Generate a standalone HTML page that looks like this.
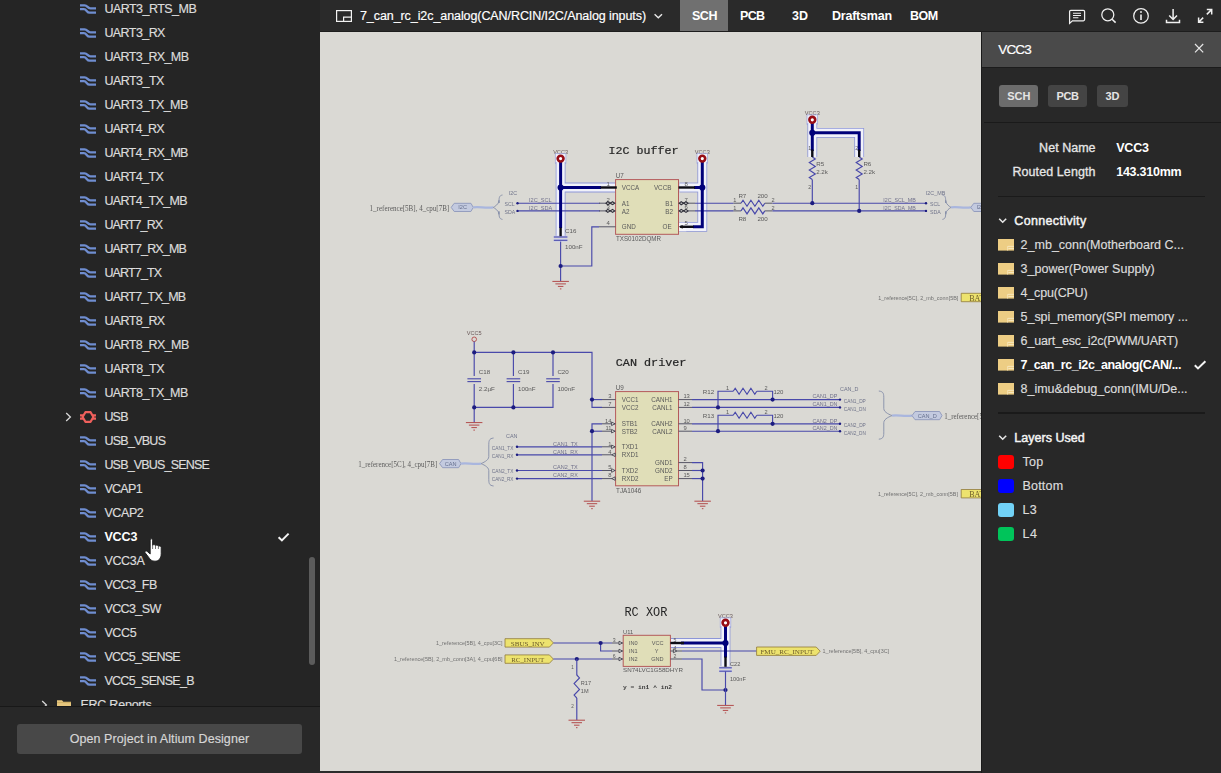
<!DOCTYPE html>
<html><head><meta charset="utf-8"><title>VCC3</title><style>
html,body{margin:0;padding:0;background:#dad9d4;}
body{width:1221px;height:773px;overflow:hidden;position:relative;font-family:"Liberation Sans",sans-serif;}
.t{position:absolute;white-space:pre;-webkit-text-stroke:0.18px currentColor;}
.i{position:absolute;overflow:visible;}
#side{position:absolute;left:0;top:0;width:320px;height:773px;background:#252525;overflow:hidden;}
#thumb{position:absolute;left:308.8px;top:556.5px;width:6.2px;height:108.5px;border-radius:3px;background:#5c5c5c;}
#foot{position:absolute;left:0;top:706px;width:320px;height:67px;background:#282828;border-top:1px solid #181818;box-sizing:border-box;}
#btn{position:absolute;left:17px;top:17px;width:285px;height:30px;border-radius:3px;background:#484848;}
#top{position:absolute;left:320px;top:0;width:901px;height:32px;background:#2a2a2a;border-bottom:1px solid #1d1d1d;box-sizing:border-box;}
#tabsel{position:absolute;left:680px;top:0;width:48px;height:31px;background:#707070;}
#rp{position:absolute;left:981px;top:32px;width:240px;height:741px;background:#282828;border-left:1.2px solid #1a1a1a;box-sizing:border-box;}
#rph{position:absolute;left:982.2px;top:32px;width:239px;height:36px;background:#4a4a4a;border-bottom:1.1px solid #1c1c1c;box-sizing:border-box;}
.pb{position:absolute;top:85px;height:22px;border-radius:3px;background:#444444;}
.hr{position:absolute;height:1.2px;background:#1a1a1a;}
.sw{position:absolute;left:998px;width:15.5px;height:14.4px;border-radius:3px;}
#cv{position:absolute;left:320px;top:32px;width:661px;height:741px;background:#dad9d4;overflow:hidden;}
#cvb{position:absolute;left:320px;top:770.5px;width:661px;height:4px;background:#2c2c2c;}
</style></head><body>
<div id="cv"></div>
<svg id="sch" style="position:absolute;left:320px;top:32px" width="661" height="741" viewBox="320 32 661 741" font-family="Liberation Sans, sans-serif" shape-rendering="geometricPrecision">
<defs><filter id="bl" x="-2%" y="-2%" width="104%" height="104%"><feGaussianBlur stdDeviation="0.42"/></filter></defs><g filter="url(#bl)">
<text x="560.6" y="153.6" font-size="5.6" text-anchor="middle" fill="#6a5a5a">VCC3</text>
<text x="702.3" y="153.6" font-size="5.6" text-anchor="middle" fill="#6a5a5a">VCC3</text>
<text x="812.3" y="114.8" font-size="5.6" text-anchor="middle" fill="#6a5a5a">VCC3</text>
<text x="725.5" y="617.8" font-size="5.6" text-anchor="middle" fill="#6a5a5a">VCC3</text>
<g fill="none" stroke-linejoin="miter" stroke-linecap="butt"><rect x="555.3" y="153.7" width="10.6" height="9.6" fill="#f1f2fa" stroke="#9ba3dc" stroke-width="0.7"/><polyline points="560.6,162.0 560.6,228.0 560.6,236.0" stroke="#8d96d8" stroke-width="9.8"/><polyline points="560.6,187.5 601.0,187.5 615.0,187.5" stroke="#8d96d8" stroke-width="9.8"/><rect x="614.4" y="184.2" width="4.6" height="6.6" fill="#f1f2fa" stroke="#9ba3dc" stroke-width="0.6"/><rect x="697.0" y="153.7" width="10.6" height="9.6" fill="#f1f2fa" stroke="#9ba3dc" stroke-width="0.7"/><polyline points="702.3,162.0 702.3,226.8 693.0,226.8 686.0,226.8" stroke="#8d96d8" stroke-width="9.8"/><polyline points="702.3,187.5 694.0,187.5 679.5,187.5" stroke="#8d96d8" stroke-width="9.8"/><rect x="675.3" y="222.4" width="11.4" height="9" fill="#f6f6fa" stroke="#9ba3dc" stroke-width="0.6"/><rect x="807.0" y="114.9" width="10.6" height="9.6" fill="#f1f2fa" stroke="#9ba3dc" stroke-width="0.7"/><polyline points="812.3,123.0 812.3,151.0 812.3,157.0" stroke="#8d96d8" stroke-width="9.8"/><polyline points="812.3,132.8 859.2,132.8 859.2,151.0 859.2,157.0" stroke="#8d96d8" stroke-width="9.8"/><rect x="720.2" y="617.9" width="10.6" height="9.6" fill="#f1f2fa" stroke="#9ba3dc" stroke-width="0.7"/><polyline points="725.5,626.0 725.5,657.6 725.5,666.0" stroke="#8d96d8" stroke-width="9.8"/><polyline points="725.5,643.0 681.0,643.0 671.0,643.0" stroke="#8d96d8" stroke-width="9.8"/><rect x="666.8" y="640" width="5" height="6" fill="#f1f2fa" stroke="#9ba3dc" stroke-width="0.6"/></g>
<g fill="none" stroke-linejoin="miter" stroke-linecap="butt"><polyline points="560.6,162.0 560.6,228.0 560.6,236.0" stroke="#f1f2fa" stroke-width="8.2"/><polyline points="560.6,187.5 601.0,187.5 615.0,187.5" stroke="#f1f2fa" stroke-width="8.2"/><polyline points="702.3,162.0 702.3,226.8 693.0,226.8 686.0,226.8" stroke="#f1f2fa" stroke-width="8.2"/><polyline points="702.3,187.5 694.0,187.5 679.5,187.5" stroke="#f1f2fa" stroke-width="8.2"/><polyline points="812.3,123.0 812.3,151.0 812.3,157.0" stroke="#f1f2fa" stroke-width="8.2"/><polyline points="812.3,132.8 859.2,132.8 859.2,151.0 859.2,157.0" stroke="#f1f2fa" stroke-width="8.2"/><polyline points="725.5,626.0 725.5,657.6 725.5,666.0" stroke="#f1f2fa" stroke-width="8.2"/><polyline points="725.5,643.0 681.0,643.0 671.0,643.0" stroke="#f1f2fa" stroke-width="8.2"/></g>
<text x="608.6" y="154.4" font-size="11.67" font-family="Liberation Mono" stroke="#262626" stroke-width="0.22" fill="#262626">I2C buffer</text>
<text x="369.6" y="210.8" font-size="8" font-family="Liberation Serif" textLength="79.6" lengthAdjust="spacingAndGlyphs" fill="#5c5c5c">1_reference[5B], 4_cpu[7B]</text>
<path d="M451.2 207.4L454.2 203.3H470.9L473.3 207.4L470.9 211.5H454.2Z" fill="#c3cadf" stroke="#8d97bb" stroke-width="0.9"/>
<text x="462.6" y="209.4" font-size="5.6" text-anchor="middle" fill="#66708e">I2C</text>
<path d="M473.3 207.4C479.3 206.2 485.3 208.6 493.3 207.4" fill="none" stroke="#a9b6de" stroke-width="2.2"/>
<path d="M502.5 195.0C499.0 195.5 499.0 198.0 499.0 203.0L499.0 200.4C499.0 204.4 494.2 206.8 493.3 207.4C494.2 208.0 499.0 210.4 499.0 214.4L499.0 211.4C499.0 216.4 499.0 218.9 502.5 219.4" fill="none" stroke="#858da8" stroke-width="0.9"/>
<text x="508.7" y="195.4" font-size="5.4" fill="#70748a">I2C</text>
<text x="504.6" y="206.0" font-size="5.2" fill="#70748a">SCL</text>
<text x="504.6" y="213.9" font-size="5.2" fill="#70748a">SDA</text>
<polyline points="517.5,203.2 600.0,203.2" fill="none" stroke="#4848aa" stroke-width="1.15"/>
<polyline points="517.5,210.9 600.0,210.9" fill="none" stroke="#4848aa" stroke-width="1.15"/>
<circle cx="517.5" cy="203.2" r="1.2" fill="#1c1c80"/>
<circle cx="517.5" cy="210.9" r="1.2" fill="#1c1c80"/>
<text x="529.0" y="202.0" font-size="5.6" fill="#70708a">I2C_SCL</text>
<text x="529.0" y="209.7" font-size="5.6" fill="#70708a">I2C_SDA</text>
<rect x="615.6" y="179.6" width="62.9" height="54.7" fill="#e0deb8" stroke="#b45a5a" stroke-width="1"/>
<text x="615.8" y="178.1" font-size="6.3" fill="#5a5a5a">U7</text>
<text x="616.0" y="241.2" font-size="6.3" textLength="45.0" lengthAdjust="spacingAndGlyphs" fill="#5a5a5a">TXS0102DQMR</text>
<text x="621.8" y="190.2" font-size="6.3" fill="#5a5a5a">VCCA</text>
<text x="621.8" y="206.3" font-size="6.3" fill="#5a5a5a">A1</text>
<text x="621.8" y="213.5" font-size="6.3" fill="#5a5a5a">A2</text>
<text x="621.8" y="229.1" font-size="6.3" fill="#5a5a5a">GND</text>
<text x="671.4" y="190.2" font-size="6.3" text-anchor="end" fill="#5a5a5a">VCCB</text>
<text x="673.0" y="206.3" font-size="6.3" text-anchor="end" fill="#5a5a5a">B1</text>
<text x="673.0" y="213.5" font-size="6.3" text-anchor="end" fill="#5a5a5a">B2</text>
<text x="671.6" y="229.1" font-size="6.3" text-anchor="end" fill="#5a5a5a">OE</text>
<text x="606.6" y="186.4" font-size="6" fill="#5a5a5a">1</text>
<text x="606.6" y="201.8" font-size="6" fill="#5a5a5a">2</text>
<text x="606.6" y="209.4" font-size="6" fill="#5a5a5a">3</text>
<text x="606.6" y="225.2" font-size="6" fill="#5a5a5a">4</text>
<text x="684.6" y="186.4" font-size="6" fill="#5a5a5a">8</text>
<text x="684.6" y="201.8" font-size="6" fill="#5a5a5a">7</text>
<text x="684.6" y="209.4" font-size="6" fill="#5a5a5a">6</text>
<text x="684.6" y="224.8" font-size="6" fill="#5a5a5a">5</text>
<path d="M599.0 203.2H615.6" stroke="#555566" stroke-width="1.0"/>
<path d="M599.0 210.9H615.6" stroke="#555566" stroke-width="1.0"/>
<path d="M599.0 226.8H615.6" stroke="#555566" stroke-width="1.0"/>
<path d="M606.0 203.2L607.8 201.7L610.2 203.2L612.6 201.7L614.6 203.2L612.6 204.7L610.2 203.2L607.8 204.7Z" fill="#cfcfcf" stroke="#30303a" stroke-width="1.1"/>
<path d="M606.0 210.9L607.8 209.4L610.2 210.9L612.6 209.4L614.6 210.9L612.6 212.4L610.2 210.9L607.8 212.4Z" fill="#cfcfcf" stroke="#30303a" stroke-width="1.1"/>
<polyline points="599.0,226.8 591.8,226.8 591.8,266.0 560.6,266.0" fill="none" stroke="#4848aa" stroke-width="1.15"/>
<polyline points="560.6,240.4 560.6,281.0" fill="none" stroke="#4848aa" stroke-width="1.15"/>
<circle cx="560.6" cy="266.0" r="2.1" fill="#1c1c80"/>
<path d="M552.4 281.4H568.9" stroke="#b24a4a" stroke-width="1"/>
<path d="M555.4 283.9H565.9" stroke="#b24a4a" stroke-width="1"/>
<path d="M557.9 286.4H563.4" stroke="#b24a4a" stroke-width="1"/>
<path d="M559.9 288.9H561.4" stroke="#b24a4a" stroke-width="1"/>
<path d="M553.8 237.0H567.4" stroke="#c9cdec" stroke-width="2.6"/>
<path d="M553.8 237.0H567.4" stroke="#4848aa" stroke-width="1.1"/>
<path d="M553.8 240.3H567.4" stroke="#c9cdec" stroke-width="2.6"/>
<path d="M553.8 240.3H567.4" stroke="#4848aa" stroke-width="1.1"/>
<text x="565.0" y="233.4" font-size="6.2" fill="#5a5a5a">C16</text>
<text x="565.0" y="248.8" font-size="6.2" fill="#5a5a5a">100nF</text>
<path d="M678.5 203.2H695.0" stroke="#555566" stroke-width="1.0"/>
<path d="M678.5 210.9H695.0" stroke="#555566" stroke-width="1.0"/>
<path d="M679.4 203.2L681.2 201.7L683.6 203.2L686.0 201.7L688.0 203.2L686.0 204.7L683.6 203.2L681.2 204.7Z" fill="#cfcfcf" stroke="#30303a" stroke-width="1.1"/>
<path d="M679.4 210.9L681.2 209.4L683.6 210.9L686.0 209.4L688.0 210.9L686.0 212.4L683.6 210.9L681.2 212.4Z" fill="#cfcfcf" stroke="#30303a" stroke-width="1.1"/>
<polyline points="695.0,203.2 733.5,203.2" fill="none" stroke="#4848aa" stroke-width="1.15"/>
<polyline points="695.0,210.9 733.5,210.9" fill="none" stroke="#4848aa" stroke-width="1.15"/>
<path d="M733.5 203.2H741.0" stroke="#555566" stroke-width="1.0"/>
<path d="M733.5 210.9H741.0" stroke="#555566" stroke-width="1.0"/>
<path d="M764.8 203.2H772.5" stroke="#555566" stroke-width="1.0"/>
<path d="M764.8 210.9H772.5" stroke="#555566" stroke-width="1.0"/>
<polyline points="741.0,203.2 743.0,200.2 747.0,206.2 750.9,200.2 754.9,206.2 758.8,200.2 762.8,206.2 764.8,203.2" fill="none" stroke="#4848aa" stroke-width="1.15"/>
<polyline points="741.0,210.9 743.0,207.9 747.0,213.9 750.9,207.9 754.9,213.9 758.8,207.9 762.8,213.9 764.8,210.9" fill="none" stroke="#4848aa" stroke-width="1.15"/>
<polyline points="772.5,203.2 926.0,203.2" fill="none" stroke="#4848aa" stroke-width="1.15"/>
<polyline points="772.5,210.9 926.0,210.9" fill="none" stroke="#4848aa" stroke-width="1.15"/>
<text x="738.4" y="198.0" font-size="6.2" fill="#5a5a5a">R7</text>
<text x="757.4" y="198.0" font-size="6.2" fill="#5a5a5a">200</text>
<text x="738.4" y="221.2" font-size="6.2" fill="#5a5a5a">R8</text>
<text x="757.4" y="221.2" font-size="6.2" fill="#5a5a5a">200</text>
<text x="733.2" y="202.2" font-size="5.6" fill="#5a5a5a">1</text>
<text x="733.2" y="209.8" font-size="5.6" fill="#5a5a5a">1</text>
<text x="771.6" y="202.2" font-size="5.6" fill="#5a5a5a">2</text>
<text x="771.6" y="209.8" font-size="5.6" fill="#5a5a5a">2</text>
<polyline points="812.3,157.0 815.3,158.9 809.3,162.6 815.3,166.4 809.3,170.1 815.3,173.9 809.3,177.6 812.3,179.5" fill="none" stroke="#4848aa" stroke-width="1.15"/>
<polyline points="859.2,157.0 862.2,158.9 856.2,162.6 862.2,166.4 856.2,170.1 862.2,173.9 856.2,177.6 859.2,179.5" fill="none" stroke="#4848aa" stroke-width="1.15"/>
<path d="M812.3 0.0H812.3" stroke="#555566" stroke-width="1.0"/>
<polyline points="812.3,179.5 812.3,203.2" fill="none" stroke="#4848aa" stroke-width="1.15"/>
<polyline points="859.2,179.5 859.2,210.9" fill="none" stroke="#4848aa" stroke-width="1.15"/>
<circle cx="812.3" cy="203.2" r="2.1" fill="#1c1c80"/>
<circle cx="859.2" cy="210.9" r="2.1" fill="#1c1c80"/>
<text x="816.2" y="166.2" font-size="6.2" fill="#5a5a5a">R5</text>
<text x="816.2" y="174.2" font-size="6.2" fill="#5a5a5a">2.2k</text>
<text x="863.4" y="166.2" font-size="6.2" fill="#5a5a5a">R6</text>
<text x="863.4" y="174.2" font-size="6.2" fill="#5a5a5a">2.2k</text>
<text x="808.2" y="150.1" font-size="5.2" fill="#5a5a5a">1</text>
<text x="855.2" y="150.1" font-size="5.2" fill="#5a5a5a">2</text>
<text x="808.2" y="189.3" font-size="5.2" fill="#5a5a5a">2</text>
<text x="855.2" y="188.5" font-size="5.2" fill="#5a5a5a">1</text>
<text x="883.2" y="202.1" font-size="5.6" textLength="32.6" lengthAdjust="spacingAndGlyphs" fill="#70708a">I2C_SCL_MB</text>
<text x="883.2" y="210.0" font-size="5.6" textLength="32.6" lengthAdjust="spacingAndGlyphs" fill="#70708a">I2C_SDA_MB</text>
<circle cx="926.0" cy="203.2" r="1.2" fill="#1c1c80"/>
<circle cx="926.0" cy="210.9" r="1.2" fill="#1c1c80"/>
<text x="925.8" y="195.1" font-size="5.4" fill="#70748a">I2C_MB</text>
<text x="930.0" y="206.0" font-size="5.2" fill="#70748a">SCL</text>
<text x="930.0" y="213.9" font-size="5.2" fill="#70748a">SDA</text>
<path d="M942.4 195.0C945.7 195.5 945.7 198.0 945.7 203.0L945.7 200.4C945.7 204.4 950.1 206.8 951.0 207.4C950.1 208.0 945.7 210.4 945.7 214.4L945.7 211.4C945.7 216.4 945.7 218.9 942.4 219.4" fill="none" stroke="#858da8" stroke-width="0.9"/>
<path d="M951.0 207.4C956.9 206.2 962.9 208.6 970.8 207.4" fill="none" stroke="#a9b6de" stroke-width="2.2"/>
<path d="M970.8 207.4L973.8 203.3H991.6L994.0 207.4L991.6 211.5H973.8Z" fill="#c3cadf" stroke="#8d97bb" stroke-width="0.9"/>
<text x="982.7" y="209.4" font-size="5.6" text-anchor="middle" fill="#66708e"></text>
<text x="976.6" y="209.3" font-size="5.4" fill="#66708e">I2</text>
<text x="878.3" y="300.3" font-size="5.2" textLength="80.0" lengthAdjust="spacingAndGlyphs" fill="#707070">1_reference[5C], 2_mb_conn[5B]</text>
<path d="M961.2 293.3H990.0V301.7H961.2Z" fill="#ede36e" stroke="#8f7a3a" stroke-width="0.8"/>
<text x="969.2" y="300.8" font-size="8" font-family="Liberation Serif" fill="#6b5a2a">BAT</text>
<text x="878.0" y="495.8" font-size="5.2" textLength="80.0" lengthAdjust="spacingAndGlyphs" fill="#707070">1_reference[5C], 2_mb_conn[5B]</text>
<path d="M961.2 489.5H990.0V497.9H961.2Z" fill="#ede36e" stroke="#8f7a3a" stroke-width="0.8"/>
<text x="969.2" y="497.0" font-size="8" font-family="Liberation Serif" fill="#6b5a2a">BAT</text>
<text x="615.8" y="366.4" font-size="11.78" font-family="Liberation Mono" stroke="#262626" stroke-width="0.22" fill="#262626">CAN driver</text>
<circle cx="474.2" cy="339.3" r="2.3" fill="none" stroke="#b24a4a" stroke-width="0.9"/>
<text x="474.2" y="335.2" font-size="5.6" text-anchor="middle" fill="#6a5a5a">VCC5</text>
<polyline points="474.2,341.6 474.2,422.4" fill="none" stroke="#4848aa" stroke-width="1.15"/>
<polyline points="474.2,352.4 592.0,352.4 592.0,407.4 602.0,407.4" fill="none" stroke="#4848aa" stroke-width="1.15"/>
<polyline points="474.2,407.4 553.0,407.4 553.0,352.4" fill="none" stroke="#4848aa" stroke-width="1.15"/>
<polyline points="513.4,352.4 513.4,407.4" fill="none" stroke="#4848aa" stroke-width="1.15"/>
<polyline points="592.0,399.6 602.0,399.6" fill="none" stroke="#4848aa" stroke-width="1.15"/>
<circle cx="474.2" cy="352.4" r="2.1" fill="#1c1c80"/>
<circle cx="513.4" cy="352.4" r="2.1" fill="#1c1c80"/>
<circle cx="553.0" cy="352.4" r="2.1" fill="#1c1c80"/>
<circle cx="474.2" cy="407.4" r="2.1" fill="#1c1c80"/>
<circle cx="513.4" cy="407.4" r="2.1" fill="#1c1c80"/>
<circle cx="592.0" cy="399.6" r="2.1" fill="#1c1c80"/>
<rect x="472.2" y="376" width="4" height="8" fill="#dad9d4"/>
<path d="M467.4 378.8H481.0" stroke="#4848aa" stroke-width="1.1"/>
<path d="M467.4 381.6H481.0" stroke="#4848aa" stroke-width="1.1"/>
<rect x="511.4" y="376" width="4" height="8" fill="#dad9d4"/>
<path d="M506.6 378.8H520.2" stroke="#4848aa" stroke-width="1.1"/>
<path d="M506.6 381.6H520.2" stroke="#4848aa" stroke-width="1.1"/>
<rect x="551.0" y="376" width="4" height="8" fill="#dad9d4"/>
<path d="M546.2 378.8H559.8" stroke="#4848aa" stroke-width="1.1"/>
<path d="M546.2 381.6H559.8" stroke="#4848aa" stroke-width="1.1"/>
<text x="478.8" y="374.4" font-size="6.2" fill="#5a5a5a">C18</text>
<text x="478.8" y="391.4" font-size="6.2" fill="#5a5a5a">2.2µF</text>
<text x="518.0" y="374.4" font-size="6.2" fill="#5a5a5a">C19</text>
<text x="518.0" y="391.4" font-size="6.2" fill="#5a5a5a">100nF</text>
<text x="557.4" y="374.4" font-size="6.2" fill="#5a5a5a">C20</text>
<text x="557.4" y="391.4" font-size="6.2" fill="#5a5a5a">100nF</text>
<path d="M465.9 422.6H482.4" stroke="#b24a4a" stroke-width="1"/>
<path d="M468.9 425.1H479.4" stroke="#b24a4a" stroke-width="1"/>
<path d="M471.4 427.6H476.9" stroke="#b24a4a" stroke-width="1"/>
<path d="M473.4 430.1H474.9" stroke="#b24a4a" stroke-width="1"/>
<rect x="615.6" y="391.6" width="62.9" height="94.2" fill="#e0deb8" stroke="#b45a5a" stroke-width="1"/>
<text x="615.8" y="390.3" font-size="6.3" fill="#5a5a5a">U9</text>
<text x="616.0" y="492.7" font-size="6.3" textLength="25.4" lengthAdjust="spacingAndGlyphs" fill="#5a5a5a">TJA1046</text>
<text x="621.8" y="402.2" font-size="6.3" fill="#5a5a5a">VCC1</text>
<path d="M602.0 399.6H615.6" stroke="#555566" stroke-width="1.0"/>
<text x="611.5" y="398.3" font-size="5.8" text-anchor="end" fill="#5a5a5a">3</text>
<text x="621.8" y="410.0" font-size="6.3" fill="#5a5a5a">VCC2</text>
<path d="M602.0 407.4H615.6" stroke="#555566" stroke-width="1.0"/>
<text x="611.5" y="406.1" font-size="5.8" text-anchor="end" fill="#5a5a5a">7</text>
<text x="621.8" y="426.4" font-size="6.3" fill="#5a5a5a">STB1</text>
<path d="M602.0 423.8H615.6" stroke="#555566" stroke-width="1.0"/>
<text x="611.5" y="422.5" font-size="5.8" text-anchor="end" fill="#5a5a5a">14</text>
<text x="621.8" y="433.8" font-size="6.3" fill="#5a5a5a">STB2</text>
<path d="M602.0 431.2H615.6" stroke="#555566" stroke-width="1.0"/>
<text x="611.5" y="429.9" font-size="5.8" text-anchor="end" fill="#5a5a5a">11</text>
<text x="621.8" y="449.4" font-size="6.3" fill="#5a5a5a">TXD1</text>
<path d="M602.0 446.8H615.6" stroke="#555566" stroke-width="1.0"/>
<text x="611.5" y="445.5" font-size="5.8" text-anchor="end" fill="#5a5a5a">1</text>
<text x="621.8" y="457.4" font-size="6.3" fill="#5a5a5a">RXD1</text>
<path d="M602.0 454.8H615.6" stroke="#555566" stroke-width="1.0"/>
<text x="611.5" y="453.5" font-size="5.8" text-anchor="end" fill="#5a5a5a">4</text>
<text x="621.8" y="473.1" font-size="6.3" fill="#5a5a5a">TXD2</text>
<path d="M602.0 470.5H615.6" stroke="#555566" stroke-width="1.0"/>
<text x="611.5" y="469.2" font-size="5.8" text-anchor="end" fill="#5a5a5a">5</text>
<text x="621.8" y="481.2" font-size="6.3" fill="#5a5a5a">RXD2</text>
<path d="M602.0 478.6H615.6" stroke="#555566" stroke-width="1.0"/>
<text x="611.5" y="477.3" font-size="5.8" text-anchor="end" fill="#5a5a5a">8</text>
<text x="672.6" y="402.2" font-size="6.3" text-anchor="end" fill="#5a5a5a">CANH1</text>
<path d="M678.5 399.6H692.0" stroke="#555566" stroke-width="1.0"/>
<text x="683.4" y="398.3" font-size="5.8" fill="#5a5a5a">13</text>
<text x="672.6" y="410.0" font-size="6.3" text-anchor="end" fill="#5a5a5a">CANL1</text>
<path d="M678.5 407.4H692.0" stroke="#555566" stroke-width="1.0"/>
<text x="683.4" y="406.1" font-size="5.8" fill="#5a5a5a">12</text>
<text x="672.6" y="426.4" font-size="6.3" text-anchor="end" fill="#5a5a5a">CANH2</text>
<path d="M678.5 423.8H692.0" stroke="#555566" stroke-width="1.0"/>
<text x="683.4" y="422.5" font-size="5.8" fill="#5a5a5a">10</text>
<text x="672.6" y="433.8" font-size="6.3" text-anchor="end" fill="#5a5a5a">CANL2</text>
<path d="M678.5 431.2H692.0" stroke="#555566" stroke-width="1.0"/>
<text x="683.4" y="429.9" font-size="5.8" fill="#5a5a5a">9</text>
<text x="672.6" y="465.2" font-size="6.3" text-anchor="end" fill="#5a5a5a">GND1</text>
<path d="M678.5 462.6H692.0" stroke="#555566" stroke-width="1.0"/>
<text x="683.4" y="461.3" font-size="5.8" fill="#5a5a5a">2</text>
<text x="672.6" y="473.1" font-size="6.3" text-anchor="end" fill="#5a5a5a">GND2</text>
<path d="M678.5 470.5H692.0" stroke="#555566" stroke-width="1.0"/>
<text x="683.4" y="469.2" font-size="5.8" fill="#5a5a5a">8</text>
<text x="672.6" y="481.2" font-size="6.3" text-anchor="end" fill="#5a5a5a">EP</text>
<path d="M678.5 478.6H692.0" stroke="#555566" stroke-width="1.0"/>
<text x="683.4" y="477.3" font-size="5.8" fill="#5a5a5a">15</text>
<path d="M611.6 422.0L615.0 423.8L611.6 425.6Z" fill="#dcdcdc" stroke="#3a3a44" stroke-width="0.8"/>
<path d="M611.6 429.4L615.0 431.2L611.6 433.0Z" fill="#dcdcdc" stroke="#3a3a44" stroke-width="0.8"/>
<path d="M611.6 445.0L615.0 446.8L611.6 448.6Z" fill="#dcdcdc" stroke="#3a3a44" stroke-width="0.8"/>
<path d="M611.6 468.7L615.0 470.5L611.6 472.3Z" fill="#dcdcdc" stroke="#3a3a44" stroke-width="0.8"/>
<path d="M615.2 453.0L611.8 454.8L615.2 456.6Z" fill="#dcdcdc" stroke="#3a3a44" stroke-width="0.8"/>
<path d="M615.2 476.8L611.8 478.6L615.2 480.4Z" fill="#dcdcdc" stroke="#3a3a44" stroke-width="0.8"/>
<polyline points="602.0,423.8 592.0,423.8 592.0,501.0" fill="none" stroke="#4848aa" stroke-width="1.15"/>
<polyline points="602.0,431.2 592.0,431.2" fill="none" stroke="#4848aa" stroke-width="1.15"/>
<circle cx="592.0" cy="431.2" r="2.1" fill="#1c1c80"/>
<path d="M583.8 501.2H600.2" stroke="#b24a4a" stroke-width="1"/>
<path d="M586.8 503.7H597.2" stroke="#b24a4a" stroke-width="1"/>
<path d="M589.2 506.2H594.8" stroke="#b24a4a" stroke-width="1"/>
<path d="M591.2 508.7H592.8" stroke="#b24a4a" stroke-width="1"/>
<text x="358.3" y="466.8" font-size="8" font-family="Liberation Serif" textLength="79.0" lengthAdjust="spacingAndGlyphs" fill="#5c5c5c">1_reference[5C], 4_cpu[7B]</text>
<path d="M439.6 463.6L442.6 459.5H458.6L461.0 463.6L458.6 467.7H442.6Z" fill="#c3cadf" stroke="#8d97bb" stroke-width="0.9"/>
<text x="450.6" y="465.6" font-size="5.6" text-anchor="middle" fill="#66708e">CAN</text>
<path d="M461.0 463.6C467.0 462.4 473.0 464.8 481.0 463.6" fill="none" stroke="#a9b6de" stroke-width="2.2"/>
<path d="M493.6 438.0C488.8 438.5 488.8 441.0 488.8 446.0L488.8 456.6C488.8 460.6 482.3 463.0 481.0 463.6C482.3 464.2 488.8 466.6 488.8 470.6L488.8 478.0C488.8 483.0 488.8 485.5 493.6 486.0" fill="none" stroke="#858da8" stroke-width="0.9"/>
<text x="506.0" y="437.9" font-size="5.4" fill="#70748a">CAN</text>
<text x="491.8" y="450.0" font-size="5.0" textLength="21.6" lengthAdjust="spacingAndGlyphs" fill="#70748a">CAN1_TX</text>
<text x="491.8" y="457.8" font-size="5.0" textLength="21.6" lengthAdjust="spacingAndGlyphs" fill="#70748a">CAN1_RX</text>
<text x="491.8" y="473.2" font-size="5.0" textLength="21.6" lengthAdjust="spacingAndGlyphs" fill="#70748a">CAN2_TX</text>
<text x="491.8" y="481.2" font-size="5.0" textLength="21.6" lengthAdjust="spacingAndGlyphs" fill="#70748a">CAN2_RX</text>
<polyline points="517.0,446.8 602.0,446.8" fill="none" stroke="#4848aa" stroke-width="1.15"/>
<circle cx="517.0" cy="446.8" r="1.2" fill="#1c1c80"/>
<text x="553.0" y="445.6" font-size="5.6" textLength="24.8" lengthAdjust="spacingAndGlyphs" fill="#70708a">CAN1_TX</text>
<polyline points="517.0,454.8 602.0,454.8" fill="none" stroke="#4848aa" stroke-width="1.15"/>
<circle cx="517.0" cy="454.8" r="1.2" fill="#1c1c80"/>
<text x="553.0" y="453.6" font-size="5.6" textLength="24.8" lengthAdjust="spacingAndGlyphs" fill="#70708a">CAN1_RX</text>
<polyline points="517.0,470.5 602.0,470.5" fill="none" stroke="#4848aa" stroke-width="1.15"/>
<circle cx="517.0" cy="470.5" r="1.2" fill="#1c1c80"/>
<text x="553.0" y="469.3" font-size="5.6" textLength="24.8" lengthAdjust="spacingAndGlyphs" fill="#70708a">CAN2_TX</text>
<polyline points="517.0,478.6 602.0,478.6" fill="none" stroke="#4848aa" stroke-width="1.15"/>
<circle cx="517.0" cy="478.6" r="1.2" fill="#1c1c80"/>
<text x="553.0" y="477.4" font-size="5.6" textLength="24.8" lengthAdjust="spacingAndGlyphs" fill="#70708a">CAN2_RX</text>
<polyline points="692.0,399.6 840.0,399.6" fill="none" stroke="#4848aa" stroke-width="1.15"/>
<polyline points="692.0,407.4 840.0,407.4" fill="none" stroke="#4848aa" stroke-width="1.15"/>
<polyline points="692.0,423.8 840.0,423.8" fill="none" stroke="#4848aa" stroke-width="1.15"/>
<polyline points="692.0,431.2 840.0,431.2" fill="none" stroke="#4848aa" stroke-width="1.15"/>
<polyline points="718.0,407.4 718.0,391.2 733.2,391.2" fill="none" stroke="#4848aa" stroke-width="1.15"/>
<polyline points="733.2,391.2 735.2,388.2 739.1,394.2 743.0,388.2 747.0,394.2 750.9,388.2 754.8,394.2 756.8,391.2" fill="none" stroke="#4848aa" stroke-width="1.15"/>
<polyline points="756.8,391.2 772.6,391.2 772.6,399.6" fill="none" stroke="#4848aa" stroke-width="1.15"/>
<circle cx="718.0" cy="407.4" r="2.1" fill="#1c1c80"/>
<circle cx="772.6" cy="399.6" r="2.1" fill="#1c1c80"/>
<text x="702.8" y="394.2" font-size="6.2" fill="#5a5a5a">R12</text>
<text x="726.0" y="390.0" font-size="5.6" fill="#5a5a5a">1</text>
<text x="764.6" y="390.0" font-size="5.6" fill="#5a5a5a">2</text>
<text x="773.4" y="394.2" font-size="6.0" fill="#5a5a5a">120</text>
<polyline points="718.0,431.2 718.0,415.2 733.2,415.2" fill="none" stroke="#4848aa" stroke-width="1.15"/>
<polyline points="733.2,415.2 735.2,412.2 739.1,418.2 743.0,412.2 747.0,418.2 750.9,412.2 754.8,418.2 756.8,415.2" fill="none" stroke="#4848aa" stroke-width="1.15"/>
<polyline points="756.8,415.2 772.6,415.2 772.6,423.8" fill="none" stroke="#4848aa" stroke-width="1.15"/>
<circle cx="718.0" cy="431.2" r="2.1" fill="#1c1c80"/>
<circle cx="772.6" cy="423.8" r="2.1" fill="#1c1c80"/>
<text x="702.8" y="418.2" font-size="6.2" fill="#5a5a5a">R13</text>
<text x="726.0" y="414.0" font-size="5.6" fill="#5a5a5a">1</text>
<text x="764.6" y="414.0" font-size="5.6" fill="#5a5a5a">2</text>
<text x="773.4" y="418.2" font-size="6.0" fill="#5a5a5a">120</text>
<text x="812.4" y="398.4" font-size="5.6" textLength="25.0" lengthAdjust="spacingAndGlyphs" fill="#70708a">CAN1_DP</text>
<circle cx="840.0" cy="399.6" r="1.2" fill="#1c1c80"/>
<text x="843.8" y="403.0" font-size="5.0" textLength="22.0" lengthAdjust="spacingAndGlyphs" fill="#70748a">CAN1_DP</text>
<text x="812.4" y="406.2" font-size="5.6" textLength="25.0" lengthAdjust="spacingAndGlyphs" fill="#70708a">CAN1_DN</text>
<circle cx="840.0" cy="407.4" r="1.2" fill="#1c1c80"/>
<text x="843.8" y="410.8" font-size="5.0" textLength="22.0" lengthAdjust="spacingAndGlyphs" fill="#70748a">CAN1_DN</text>
<text x="812.4" y="422.6" font-size="5.6" textLength="25.0" lengthAdjust="spacingAndGlyphs" fill="#70708a">CAN2_DP</text>
<circle cx="840.0" cy="423.8" r="1.2" fill="#1c1c80"/>
<text x="843.8" y="427.2" font-size="5.0" textLength="22.0" lengthAdjust="spacingAndGlyphs" fill="#70748a">CAN2_DP</text>
<text x="812.4" y="430.0" font-size="5.6" textLength="25.0" lengthAdjust="spacingAndGlyphs" fill="#70708a">CAN2_DN</text>
<circle cx="840.0" cy="431.2" r="1.2" fill="#1c1c80"/>
<text x="843.8" y="434.6" font-size="5.0" textLength="22.0" lengthAdjust="spacingAndGlyphs" fill="#70748a">CAN2_DN</text>
<text x="840.0" y="391.3" font-size="5.4" fill="#70748a">CAN_D</text>
<path d="M878.8 391.0C883.8 391.5 883.8 394.0 883.8 399.0L883.8 408.6C883.8 412.6 890.7 415.0 892.0 415.6C890.7 416.2 883.8 418.6 883.8 422.6L883.8 431.2C883.8 436.2 883.8 438.7 878.8 439.2" fill="none" stroke="#858da8" stroke-width="0.9"/>
<path d="M892.0 415.6C898.0 414.4 904.0 416.8 912.0 415.6" fill="none" stroke="#a9b6de" stroke-width="2.2"/>
<path d="M912.0 415.6L915.0 411.5H939.6L942.0 415.6L939.6 419.7H915.0Z" fill="#c3cadf" stroke="#8d97bb" stroke-width="0.9"/>
<text x="927.3" y="417.6" font-size="5.6" text-anchor="middle" fill="#66708e">CAN_D</text>
<text x="944.2" y="418.7" font-size="8" font-family="Liberation Serif" textLength="79.0" lengthAdjust="spacingAndGlyphs" fill="#5c5c5c">1_reference[5C], 4_cpu[7B]</text>
<polyline points="692.0,462.6 702.6,462.6 702.6,501.0" fill="none" stroke="#4848aa" stroke-width="1.15"/>
<polyline points="692.0,470.5 702.6,470.5" fill="none" stroke="#4848aa" stroke-width="1.15"/>
<polyline points="692.0,478.6 702.6,478.6" fill="none" stroke="#4848aa" stroke-width="1.15"/>
<circle cx="702.6" cy="470.5" r="2.1" fill="#1c1c80"/>
<circle cx="702.6" cy="478.6" r="2.1" fill="#1c1c80"/>
<path d="M694.4 501.2H710.9" stroke="#b24a4a" stroke-width="1"/>
<path d="M697.4 503.7H707.9" stroke="#b24a4a" stroke-width="1"/>
<path d="M699.9 506.2H705.4" stroke="#b24a4a" stroke-width="1"/>
<path d="M701.9 508.7H703.4" stroke="#b24a4a" stroke-width="1"/>
<text x="624.4" y="615.9" font-size="12" font-family="Liberation Mono" textLength="43.0" lengthAdjust="spacingAndGlyphs" fill="#262626">RC XOR</text>
<rect x="623.2" y="635.3" width="47.2" height="31.1" fill="#e0deb8" stroke="#b45a5a" stroke-width="1"/>
<text x="623.0" y="634.1" font-size="5.8" fill="#5a5a5a">U11</text>
<text x="623.0" y="672.3" font-size="5.8" textLength="60.0" lengthAdjust="spacingAndGlyphs" fill="#5a5a5a">SN74LVC1G58DHYR</text>
<text x="623.0" y="688.8" font-size="5.6" font-family="Liberation Mono" font-weight="bold" textLength="49.0" lengthAdjust="spacingAndGlyphs" fill="#3a3a3a">y = in1 ^ in2</text>
<text x="629.0" y="645.2" font-size="5.6" fill="#5a5a5a">IN0</text>
<text x="629.0" y="653.0" font-size="5.6" fill="#5a5a5a">IN1</text>
<text x="629.0" y="661.0" font-size="5.6" fill="#5a5a5a">IN2</text>
<text x="663.6" y="645.2" font-size="5.6" text-anchor="end" fill="#5a5a5a">VCC</text>
<text x="658.4" y="653.0" font-size="5.6" text-anchor="end" fill="#5a5a5a">Y</text>
<text x="663.6" y="661.0" font-size="5.6" text-anchor="end" fill="#5a5a5a">GND</text>
<path d="M505.0 638.7H549.4L553.4 642.9L549.4 647.1H505.0Z" fill="#ede36e" stroke="#8f7a3a" stroke-width="0.8"/>
<text x="527.7" y="645.5" font-size="6.6" text-anchor="middle" font-family="Liberation Serif" textLength="34.0" lengthAdjust="spacingAndGlyphs" fill="#6b5a2a">SBUS_INV</text>
<path d="M505.0 654.9H549.4L553.4 659.1L549.4 663.3H505.0Z" fill="#ede36e" stroke="#8f7a3a" stroke-width="0.8"/>
<text x="527.7" y="661.7" font-size="6.6" text-anchor="middle" font-family="Liberation Serif" textLength="33.0" lengthAdjust="spacingAndGlyphs" fill="#6b5a2a">RC_INPUT</text>
<text x="436.0" y="645.3" font-size="4.9" textLength="66.5" lengthAdjust="spacingAndGlyphs" fill="#707070">1_reference[5B], 4_cpu[3C]</text>
<text x="394.0" y="661.3" font-size="4.9" textLength="108.6" lengthAdjust="spacingAndGlyphs" fill="#707070">1_reference[5B], 2_mb_conn[3A], 4_cpu[6B]</text>
<polyline points="553.4,643.0 612.0,643.0" fill="none" stroke="#4848aa" stroke-width="1.15"/>
<polyline points="600.6,643.0 600.6,651.0 612.0,651.0" fill="none" stroke="#4848aa" stroke-width="1.15"/>
<circle cx="600.6" cy="643.0" r="2.1" fill="#1c1c80"/>
<polyline points="553.4,659.0 612.0,659.0" fill="none" stroke="#4848aa" stroke-width="1.15"/>
<circle cx="576.8" cy="659.0" r="2.1" fill="#1c1c80"/>
<path d="M612.0 643.0H622.8" stroke="#555566" stroke-width="1.0"/>
<path d="M612.0 651.0H622.8" stroke="#555566" stroke-width="1.0"/>
<path d="M612.0 659.0H622.8" stroke="#555566" stroke-width="1.0"/>
<path d="M619.0 641.2L622.4 643.0L619.0 644.8Z" fill="#dcdcdc" stroke="#3a3a44" stroke-width="0.8"/>
<path d="M619.0 649.2L622.4 651.0L619.0 652.8Z" fill="#dcdcdc" stroke="#3a3a44" stroke-width="0.8"/>
<path d="M619.0 657.2L622.4 659.0L619.0 660.8Z" fill="#dcdcdc" stroke="#3a3a44" stroke-width="0.8"/>
<text x="615.6" y="641.9" font-size="5.2" text-anchor="end" fill="#5a5a5a">3</text>
<text x="615.6" y="657.5" font-size="5.2" text-anchor="end" fill="#5a5a5a">6</text>
<polyline points="576.8,659.0 576.8,675.2" fill="none" stroke="#4848aa" stroke-width="1.15"/>
<polyline points="576.8,675.0 579.5,677.9 574.1,683.6 579.5,689.4 574.1,695.1 576.8,698.0" fill="none" stroke="#4848aa" stroke-width="1.15"/>
<polyline points="576.8,698.0 576.8,720.0" fill="none" stroke="#4848aa" stroke-width="1.15"/>
<path d="M568.5 720.2H585.0" stroke="#b24a4a" stroke-width="1"/>
<path d="M571.5 722.7H582.0" stroke="#b24a4a" stroke-width="1"/>
<path d="M574.0 725.2H579.5" stroke="#b24a4a" stroke-width="1"/>
<path d="M576.0 727.7H577.5" stroke="#b24a4a" stroke-width="1"/>
<text x="580.8" y="685.2" font-size="5.6" fill="#5a5a5a">R17</text>
<text x="580.8" y="693.2" font-size="5.6" fill="#5a5a5a">1M</text>
<text x="572.6" y="669.1" font-size="4.6" text-anchor="middle" fill="#5a5a5a">1</text>
<text x="572.6" y="708.1" font-size="4.6" text-anchor="middle" fill="#5a5a5a">2</text>
<path d="M670.4 651.0H682.0" stroke="#555566" stroke-width="1.0"/>
<path d="M670.4 659.0H682.0" stroke="#555566" stroke-width="1.0"/>
<path d="M673.4 649.2L676.8 651.0L673.4 652.8Z" fill="#dcdcdc" stroke="#3a3a44" stroke-width="0.8"/>
<polyline points="682.0,651.0 756.6,651.0" fill="none" stroke="#4848aa" stroke-width="1.15"/>
<polyline points="682.0,659.0 702.0,659.0 702.0,690.0 725.5,690.0" fill="none" stroke="#4848aa" stroke-width="1.15"/>
<circle cx="725.5" cy="690.0" r="2.1" fill="#1c1c80"/>
<path d="M719.2 667.8H731.8" stroke="#c9cdec" stroke-width="2.6"/>
<path d="M719.2 667.8H731.8" stroke="#4848aa" stroke-width="1.1"/>
<path d="M719.2 671.2H731.8" stroke="#c9cdec" stroke-width="2.6"/>
<path d="M719.2 671.2H731.8" stroke="#4848aa" stroke-width="1.1"/>
<polyline points="725.5,671.4 725.5,705.2" fill="none" stroke="#4848aa" stroke-width="1.15"/>
<path d="M717.2 705.4H733.8" stroke="#b24a4a" stroke-width="1"/>
<path d="M720.2 707.9H730.8" stroke="#b24a4a" stroke-width="1"/>
<path d="M722.8 710.4H728.2" stroke="#b24a4a" stroke-width="1"/>
<path d="M724.8 712.9H726.2" stroke="#b24a4a" stroke-width="1"/>
<text x="730.0" y="666.2" font-size="5.6" fill="#5a5a5a">C22</text>
<text x="730.0" y="681.4" font-size="5.6" fill="#5a5a5a">100nF</text>
<text x="673.4" y="641.7" font-size="5.2" fill="#5a5a5a">5</text>
<text x="673.4" y="649.5" font-size="5.2" fill="#5a5a5a">4</text>
<text x="673.4" y="657.7" font-size="5.2" fill="#5a5a5a">2</text>
<path d="M756.6 647.0H816.2L820.2 651.2L816.2 655.4H756.6Z" fill="#ede36e" stroke="#8f7a3a" stroke-width="0.8"/>
<text x="786.9" y="653.8" font-size="6.6" text-anchor="middle" font-family="Liberation Serif" textLength="53.0" lengthAdjust="spacingAndGlyphs" fill="#6b5a2a">FMU_RC_INPUT</text>
<text x="822.6" y="653.0" font-size="4.9" textLength="66.5" lengthAdjust="spacingAndGlyphs" fill="#707070">1_reference[5B], 4_cpu[3C]</text>
<g fill="none" stroke-linejoin="miter" stroke-linecap="butt"><polyline points="560.6,162.0 560.6,228.0" stroke="#04047a" stroke-width="3.0"/><polyline points="560.6,187.5 601.0,187.5" stroke="#04047a" stroke-width="3.0"/><circle cx="560.6" cy="187.5" r="3.1" fill="#04047a" stroke="none"/><polyline points="702.3,162.0 702.3,226.8 693.0,226.8" stroke="#04047a" stroke-width="3.0"/><polyline points="702.3,187.5 694.0,187.5" stroke="#04047a" stroke-width="3.0"/><circle cx="702.3" cy="187.5" r="3.1" fill="#04047a" stroke="none"/><polyline points="812.3,123.0 812.3,151.0" stroke="#04047a" stroke-width="3.0"/><polyline points="812.3,132.8 859.2,132.8 859.2,151.0" stroke="#04047a" stroke-width="3.0"/><circle cx="812.3" cy="132.8" r="3.1" fill="#04047a" stroke="none"/><polyline points="725.5,626.0 725.5,657.6" stroke="#04047a" stroke-width="3.0"/><polyline points="725.5,643.0 681.0,643.0" stroke="#04047a" stroke-width="3.0"/><circle cx="725.5" cy="643.0" r="3.1" fill="#04047a" stroke="none"/></g>
<path d="M600.5 187.5H616.8" stroke="#0a0a12" stroke-width="2.4"/>
<path d="M560.6 227.6V236.2" stroke="#0a0a12" stroke-width="2.4"/>
<path d="M678.6 187.5H695.0" stroke="#0a0a12" stroke-width="2.4"/>
<path d="M680.2 226.8H693.6" stroke="#0a0a12" stroke-width="2.4"/>
<path d="M678.8 226.8L682.6 224.9V228.7Z" fill="#0a0a12"/>
<path d="M812.3 149.6V157.0" stroke="#0a0a12" stroke-width="2.4"/>
<path d="M859.2 149.6V157.0" stroke="#0a0a12" stroke-width="2.4"/>
<path d="M670.4 643.0H684.0" stroke="#0a0a12" stroke-width="2.4"/>
<path d="M725.5 656.6V666.8" stroke="#0a0a12" stroke-width="2.4"/>
<circle cx="560.6" cy="158.6" r="2.9" fill="#ffffff" stroke="#970b14" stroke-width="2.6"/>
<circle cx="702.3" cy="158.6" r="2.9" fill="#ffffff" stroke="#970b14" stroke-width="2.6"/>
<circle cx="812.3" cy="119.8" r="2.9" fill="#ffffff" stroke="#970b14" stroke-width="2.6"/>
<circle cx="725.5" cy="622.8" r="2.9" fill="#ffffff" stroke="#970b14" stroke-width="2.6"/>
</g></svg>
<div id="cvb"></div>
<div id="side"></div>
<svg class="i" style="left:80px;top:3.0px" width="16" height="12" viewBox="0 0 16 12"><path d="M0 2.4H4.6C7.6 2.4 7.4 5.3 10.4 5.3H16M0 6.2H3.8C6.8 6.2 6.6 9.7 9.6 9.7H16" fill="none" stroke="#6f8dd0" stroke-width="2.3"/></svg>
<span class="t" style="left:104.40px;top:0.60px;font-size:12.5px;line-height:16px;color:#dcdcdc;letter-spacing:-0.532px;">UART3_RTS_MB</span>
<svg class="i" style="left:80px;top:27.0px" width="16" height="12" viewBox="0 0 16 12"><path d="M0 2.4H4.6C7.6 2.4 7.4 5.3 10.4 5.3H16M0 6.2H3.8C6.8 6.2 6.6 9.7 9.6 9.7H16" fill="none" stroke="#6f8dd0" stroke-width="2.3"/></svg>
<span class="t" style="left:104.40px;top:24.60px;font-size:12.5px;line-height:16px;color:#dcdcdc;letter-spacing:-0.572px;">UART3_RX</span>
<svg class="i" style="left:80px;top:51.0px" width="16" height="12" viewBox="0 0 16 12"><path d="M0 2.4H4.6C7.6 2.4 7.4 5.3 10.4 5.3H16M0 6.2H3.8C6.8 6.2 6.6 9.7 9.6 9.7H16" fill="none" stroke="#6f8dd0" stroke-width="2.3"/></svg>
<span class="t" style="left:104.40px;top:48.60px;font-size:12.5px;line-height:16px;color:#dcdcdc;letter-spacing:-0.616px;">UART3_RX_MB</span>
<svg class="i" style="left:80px;top:75.0px" width="16" height="12" viewBox="0 0 16 12"><path d="M0 2.4H4.6C7.6 2.4 7.4 5.3 10.4 5.3H16M0 6.2H3.8C6.8 6.2 6.6 9.7 9.6 9.7H16" fill="none" stroke="#6f8dd0" stroke-width="2.3"/></svg>
<span class="t" style="left:104.40px;top:72.60px;font-size:12.5px;line-height:16px;color:#dcdcdc;letter-spacing:-0.523px;">UART3_TX</span>
<svg class="i" style="left:80px;top:99.0px" width="16" height="12" viewBox="0 0 16 12"><path d="M0 2.4H4.6C7.6 2.4 7.4 5.3 10.4 5.3H16M0 6.2H3.8C6.8 6.2 6.6 9.7 9.6 9.7H16" fill="none" stroke="#6f8dd0" stroke-width="2.3"/></svg>
<span class="t" style="left:104.40px;top:96.60px;font-size:12.5px;line-height:16px;color:#dcdcdc;letter-spacing:-0.544px;">UART3_TX_MB</span>
<svg class="i" style="left:80px;top:123.0px" width="16" height="12" viewBox="0 0 16 12"><path d="M0 2.4H4.6C7.6 2.4 7.4 5.3 10.4 5.3H16M0 6.2H3.8C6.8 6.2 6.6 9.7 9.6 9.7H16" fill="none" stroke="#6f8dd0" stroke-width="2.3"/></svg>
<span class="t" style="left:104.40px;top:120.60px;font-size:12.5px;line-height:16px;color:#dcdcdc;letter-spacing:-0.697px;">UART4_RX</span>
<svg class="i" style="left:80px;top:147.0px" width="16" height="12" viewBox="0 0 16 12"><path d="M0 2.4H4.6C7.6 2.4 7.4 5.3 10.4 5.3H16M0 6.2H3.8C6.8 6.2 6.6 9.7 9.6 9.7H16" fill="none" stroke="#6f8dd0" stroke-width="2.3"/></svg>
<span class="t" style="left:104.40px;top:144.60px;font-size:12.5px;line-height:16px;color:#dcdcdc;letter-spacing:-0.670px;">UART4_RX_MB</span>
<svg class="i" style="left:80px;top:171.0px" width="16" height="12" viewBox="0 0 16 12"><path d="M0 2.4H4.6C7.6 2.4 7.4 5.3 10.4 5.3H16M0 6.2H3.8C6.8 6.2 6.6 9.7 9.6 9.7H16" fill="none" stroke="#6f8dd0" stroke-width="2.3"/></svg>
<span class="t" style="left:104.40px;top:168.60px;font-size:12.5px;line-height:16px;color:#dcdcdc;letter-spacing:-0.610px;">UART4_TX</span>
<svg class="i" style="left:80px;top:195.0px" width="16" height="12" viewBox="0 0 16 12"><path d="M0 2.4H4.6C7.6 2.4 7.4 5.3 10.4 5.3H16M0 6.2H3.8C6.8 6.2 6.6 9.7 9.6 9.7H16" fill="none" stroke="#6f8dd0" stroke-width="2.3"/></svg>
<span class="t" style="left:104.40px;top:192.60px;font-size:12.5px;line-height:16px;color:#dcdcdc;letter-spacing:-0.608px;">UART4_TX_MB</span>
<svg class="i" style="left:80px;top:219.0px" width="16" height="12" viewBox="0 0 16 12"><path d="M0 2.4H4.6C7.6 2.4 7.4 5.3 10.4 5.3H16M0 6.2H3.8C6.8 6.2 6.6 9.7 9.6 9.7H16" fill="none" stroke="#6f8dd0" stroke-width="2.3"/></svg>
<span class="t" style="left:104.40px;top:216.60px;font-size:12.5px;line-height:16px;color:#dcdcdc;letter-spacing:-0.909px;">UART7_RX</span>
<svg class="i" style="left:80px;top:243.0px" width="16" height="12" viewBox="0 0 16 12"><path d="M0 2.4H4.6C7.6 2.4 7.4 5.3 10.4 5.3H16M0 6.2H3.8C6.8 6.2 6.6 9.7 9.6 9.7H16" fill="none" stroke="#6f8dd0" stroke-width="2.3"/></svg>
<span class="t" style="left:104.40px;top:240.60px;font-size:12.5px;line-height:16px;color:#dcdcdc;letter-spacing:-0.825px;">UART7_RX_MB</span>
<svg class="i" style="left:80px;top:267.0px" width="16" height="12" viewBox="0 0 16 12"><path d="M0 2.4H4.6C7.6 2.4 7.4 5.3 10.4 5.3H16M0 6.2H3.8C6.8 6.2 6.6 9.7 9.6 9.7H16" fill="none" stroke="#6f8dd0" stroke-width="2.3"/></svg>
<span class="t" style="left:104.40px;top:264.60px;font-size:12.5px;line-height:16px;color:#dcdcdc;letter-spacing:-0.848px;">UART7_TX</span>
<svg class="i" style="left:80px;top:291.0px" width="16" height="12" viewBox="0 0 16 12"><path d="M0 2.4H4.6C7.6 2.4 7.4 5.3 10.4 5.3H16M0 6.2H3.8C6.8 6.2 6.6 9.7 9.6 9.7H16" fill="none" stroke="#6f8dd0" stroke-width="2.3"/></svg>
<span class="t" style="left:104.40px;top:288.60px;font-size:12.5px;line-height:16px;color:#dcdcdc;letter-spacing:-0.762px;">UART7_TX_MB</span>
<svg class="i" style="left:80px;top:315.0px" width="16" height="12" viewBox="0 0 16 12"><path d="M0 2.4H4.6C7.6 2.4 7.4 5.3 10.4 5.3H16M0 6.2H3.8C6.8 6.2 6.6 9.7 9.6 9.7H16" fill="none" stroke="#6f8dd0" stroke-width="2.3"/></svg>
<span class="t" style="left:104.40px;top:312.60px;font-size:12.5px;line-height:16px;color:#dcdcdc;letter-spacing:-0.609px;">UART8_RX</span>
<svg class="i" style="left:80px;top:339.0px" width="16" height="12" viewBox="0 0 16 12"><path d="M0 2.4H4.6C7.6 2.4 7.4 5.3 10.4 5.3H16M0 6.2H3.8C6.8 6.2 6.6 9.7 9.6 9.7H16" fill="none" stroke="#6f8dd0" stroke-width="2.3"/></svg>
<span class="t" style="left:104.40px;top:336.60px;font-size:12.5px;line-height:16px;color:#dcdcdc;letter-spacing:-0.589px;">UART8_RX_MB</span>
<svg class="i" style="left:80px;top:363.0px" width="16" height="12" viewBox="0 0 16 12"><path d="M0 2.4H4.6C7.6 2.4 7.4 5.3 10.4 5.3H16M0 6.2H3.8C6.8 6.2 6.6 9.7 9.6 9.7H16" fill="none" stroke="#6f8dd0" stroke-width="2.3"/></svg>
<span class="t" style="left:104.40px;top:360.60px;font-size:12.5px;line-height:16px;color:#dcdcdc;letter-spacing:-0.498px;">UART8_TX</span>
<svg class="i" style="left:80px;top:387.0px" width="16" height="12" viewBox="0 0 16 12"><path d="M0 2.4H4.6C7.6 2.4 7.4 5.3 10.4 5.3H16M0 6.2H3.8C6.8 6.2 6.6 9.7 9.6 9.7H16" fill="none" stroke="#6f8dd0" stroke-width="2.3"/></svg>
<span class="t" style="left:104.40px;top:384.60px;font-size:12.5px;line-height:16px;color:#dcdcdc;letter-spacing:-0.544px;">UART8_TX_MB</span>
<svg class="i" style="left:64px;top:409.0px" width="34" height="16" viewBox="64 0 34 16"><path d="M66.2 4 70.4 8 66.2 12" fill="none" stroke="#d8d8d8" stroke-width="1.3"/><g fill="none" stroke="#f0605c" stroke-width="2.2"><path d="M85.4 3.2H90.6L93.4 8L90.6 12.8H85.4L82.6 8Z" stroke-linejoin="round"/><path d="M80 6.3H83.6M80 9.7H83.6M92.4 6.3H96M92.4 9.7H96"/></g></svg>
<span class="t" style="left:104.40px;top:408.60px;font-size:12.5px;line-height:16px;color:#dcdcdc;letter-spacing:-0.801px;">USB</span>
<svg class="i" style="left:80px;top:435.0px" width="16" height="12" viewBox="0 0 16 12"><path d="M0 2.4H4.6C7.6 2.4 7.4 5.3 10.4 5.3H16M0 6.2H3.8C6.8 6.2 6.6 9.7 9.6 9.7H16" fill="none" stroke="#6f8dd0" stroke-width="2.3"/></svg>
<span class="t" style="left:104.40px;top:432.60px;font-size:12.5px;line-height:16px;color:#dcdcdc;letter-spacing:-0.725px;">USB_VBUS</span>
<svg class="i" style="left:80px;top:459.0px" width="16" height="12" viewBox="0 0 16 12"><path d="M0 2.4H4.6C7.6 2.4 7.4 5.3 10.4 5.3H16M0 6.2H3.8C6.8 6.2 6.6 9.7 9.6 9.7H16" fill="none" stroke="#6f8dd0" stroke-width="2.3"/></svg>
<span class="t" style="left:104.40px;top:456.60px;font-size:12.5px;line-height:16px;color:#dcdcdc;letter-spacing:-0.809px;">USB_VBUS_SENSE</span>
<svg class="i" style="left:80px;top:483.0px" width="16" height="12" viewBox="0 0 16 12"><path d="M0 2.4H4.6C7.6 2.4 7.4 5.3 10.4 5.3H16M0 6.2H3.8C6.8 6.2 6.6 9.7 9.6 9.7H16" fill="none" stroke="#6f8dd0" stroke-width="2.3"/></svg>
<span class="t" style="left:104.40px;top:480.60px;font-size:12.5px;line-height:16px;color:#dcdcdc;letter-spacing:-0.699px;">VCAP1</span>
<svg class="i" style="left:80px;top:507.0px" width="16" height="12" viewBox="0 0 16 12"><path d="M0 2.4H4.6C7.6 2.4 7.4 5.3 10.4 5.3H16M0 6.2H3.8C6.8 6.2 6.6 9.7 9.6 9.7H16" fill="none" stroke="#6f8dd0" stroke-width="2.3"/></svg>
<span class="t" style="left:104.40px;top:504.60px;font-size:12.5px;line-height:16px;color:#dcdcdc;letter-spacing:-0.399px;">VCAP2</span>
<svg class="i" style="left:80px;top:531.0px" width="16" height="12" viewBox="0 0 16 12"><path d="M0 2.4H4.6C7.6 2.4 7.4 5.3 10.4 5.3H16M0 6.2H3.8C6.8 6.2 6.6 9.7 9.6 9.7H16" fill="none" stroke="#6f8dd0" stroke-width="2.3"/></svg>
<span class="t" style="left:104.40px;top:528.60px;font-size:12.5px;line-height:16px;color:#ffffff;font-weight:bold;-webkit-text-stroke:0;letter-spacing:-0.111px;">VCC3</span>
<svg class="i" style="left:276px;top:530.6px" width="16" height="12" viewBox="0 0 16 12"><path d="M2.6 6.2 5.9 9.4 12.6 2.6" fill="none" stroke="#f4f4f4" stroke-width="2"/></svg>
<svg class="i" style="left:80px;top:555.0px" width="16" height="12" viewBox="0 0 16 12"><path d="M0 2.4H4.6C7.6 2.4 7.4 5.3 10.4 5.3H16M0 6.2H3.8C6.8 6.2 6.6 9.7 9.6 9.7H16" fill="none" stroke="#6f8dd0" stroke-width="2.3"/></svg>
<span class="t" style="left:104.40px;top:552.60px;font-size:12.5px;line-height:16px;color:#dcdcdc;letter-spacing:-0.317px;">VCC3A</span>
<svg class="i" style="left:80px;top:579.0px" width="16" height="12" viewBox="0 0 16 12"><path d="M0 2.4H4.6C7.6 2.4 7.4 5.3 10.4 5.3H16M0 6.2H3.8C6.8 6.2 6.6 9.7 9.6 9.7H16" fill="none" stroke="#6f8dd0" stroke-width="2.3"/></svg>
<span class="t" style="left:104.40px;top:576.60px;font-size:12.5px;line-height:16px;color:#dcdcdc;letter-spacing:-0.567px;">VCC3_FB</span>
<svg class="i" style="left:80px;top:603.0px" width="16" height="12" viewBox="0 0 16 12"><path d="M0 2.4H4.6C7.6 2.4 7.4 5.3 10.4 5.3H16M0 6.2H3.8C6.8 6.2 6.6 9.7 9.6 9.7H16" fill="none" stroke="#6f8dd0" stroke-width="2.3"/></svg>
<span class="t" style="left:104.40px;top:600.60px;font-size:12.5px;line-height:16px;color:#dcdcdc;letter-spacing:-0.590px;">VCC3_SW</span>
<svg class="i" style="left:80px;top:627.0px" width="16" height="12" viewBox="0 0 16 12"><path d="M0 2.4H4.6C7.6 2.4 7.4 5.3 10.4 5.3H16M0 6.2H3.8C6.8 6.2 6.6 9.7 9.6 9.7H16" fill="none" stroke="#6f8dd0" stroke-width="2.3"/></svg>
<span class="t" style="left:104.40px;top:624.60px;font-size:12.5px;line-height:16px;color:#dcdcdc;letter-spacing:-0.361px;">VCC5</span>
<svg class="i" style="left:80px;top:651.0px" width="16" height="12" viewBox="0 0 16 12"><path d="M0 2.4H4.6C7.6 2.4 7.4 5.3 10.4 5.3H16M0 6.2H3.8C6.8 6.2 6.6 9.7 9.6 9.7H16" fill="none" stroke="#6f8dd0" stroke-width="2.3"/></svg>
<span class="t" style="left:104.40px;top:648.60px;font-size:12.5px;line-height:16px;color:#dcdcdc;letter-spacing:-0.708px;">VCC5_SENSE</span>
<svg class="i" style="left:80px;top:675.0px" width="16" height="12" viewBox="0 0 16 12"><path d="M0 2.4H4.6C7.6 2.4 7.4 5.3 10.4 5.3H16M0 6.2H3.8C6.8 6.2 6.6 9.7 9.6 9.7H16" fill="none" stroke="#6f8dd0" stroke-width="2.3"/></svg>
<span class="t" style="left:104.40px;top:672.60px;font-size:12.5px;line-height:16px;color:#dcdcdc;letter-spacing:-0.714px;">VCC5_SENSE_B</span>
<svg class="i" style="left:40px;top:697.0px" width="34" height="16" viewBox="40 0 34 16"><path d="M42.2 4 46.4 8 42.2 12" fill="none" stroke="#d8d8d8" stroke-width="1.3"/><path d="M57 3.2h5l1.3 1.6H71v8H57z" fill="#e6c67e"/><path d="M57 5.6h14" stroke="#c9a85e" stroke-width="0.8"/></svg>
<span class="t" style="left:80.40px;top:696.60px;font-size:12.5px;line-height:16px;color:#dcdcdc;letter-spacing:-0.221px;">ERC Reports</span>
<div id="thumb"></div>
<svg class="i" style="left:140px;top:534px;z-index:5" width="26" height="32" viewBox="140 534 26 32"><path d="M150.2 540.1C150.2 538.4 152.6 538.4 152.6 540.1V545.4C152.8 544.3 155.3 544.3 155.5 545.6C155.8 544.8 158.2 544.9 158.4 546.2C158.8 545.6 161.2 545.9 161.2 547.4V553.5C161.2 558.5 158.6 561.2 155 561.2C151.6 561.2 150.2 559.6 148.6 557.2L145 552.6C144.4 551.4 146 550.4 147.2 551.4L150.2 554Z" fill="#ffffff" stroke="#1c1c1c" stroke-width="0.9" stroke-linejoin="round"/><path d="M152.6 545.4V549M155.5 545.6V549M158.4 546.2V549" stroke="#3a3a3a" stroke-width="0.7"/></svg>
<div id="foot"><div id="btn"></div></div>
<span class="t" style="left:69.70px;top:731.00px;font-size:12.5px;line-height:16px;color:#d6d6d6;letter-spacing:0.075px;">Open Project in Altium Designer</span>
<div id="top"></div>
<svg class="i" style="left:335px;top:9px" width="18" height="14" viewBox="335 9 18 14"><rect x="336.6" y="10.6" width="14.8" height="10.8" fill="none" stroke="#f2f2f2" stroke-width="1.2"/><path d="M343.6 21.4V17.2H351.4" fill="none" stroke="#f2f2f2" stroke-width="1.2"/></svg>
<span class="t" style="left:360.00px;top:7.60px;font-size:12.5px;line-height:16px;color:#ffffff;letter-spacing:-0.080px;">7_can_rc_i2c_analog(CAN/RCIN/I2C/Analog inputs)</span>
<svg class="i" style="left:652px;top:11px" width="12" height="10" viewBox="652 11 12 10"><path d="M654.6 14.2 658.3 17.8 662 14.2" fill="none" stroke="#e8e8e8" stroke-width="1.4"/></svg>
<div id="tabsel"></div>
<span class="t" style="left:692.00px;top:7.60px;font-size:12.5px;line-height:16px;color:#ffffff;font-weight:bold;-webkit-text-stroke:0;letter-spacing:-0.464px;">SCH</span>
<span class="t" style="left:740.00px;top:7.60px;font-size:12.5px;line-height:16px;color:#ffffff;font-weight:bold;-webkit-text-stroke:0;letter-spacing:-0.664px;">PCB</span>
<span class="t" style="left:792.00px;top:7.60px;font-size:12.5px;line-height:16px;color:#ffffff;font-weight:bold;-webkit-text-stroke:0;letter-spacing:0.010px;">3D</span>
<span class="t" style="left:832.00px;top:7.60px;font-size:12.5px;line-height:16px;color:#ffffff;font-weight:bold;-webkit-text-stroke:0;letter-spacing:-0.225px;">Draftsman</span>
<span class="t" style="left:910.00px;top:7.60px;font-size:12.5px;line-height:16px;color:#ffffff;font-weight:bold;-webkit-text-stroke:0;letter-spacing:-0.521px;">BOM</span>
<svg class="i" style="left:1060px;top:4px" width="160" height="26" viewBox="1060 4 160 26" fill="none" stroke="#f0f0f0" stroke-width="1.25">
<path d="M1069.6 23.4V11.6a1.2 1.2 0 0 1 1.2-1.2H1083.4a1.2 1.2 0 0 1 1.2 1.2V19.6a1.2 1.2 0 0 1 -1.2 1.2H1072.4z"/>
<path d="M1073 13.2H1081M1073 15.5H1081M1073 17.8H1078.4" stroke-width="1.1"/>
<circle cx="1107.8" cy="14.8" r="6"/><path d="M1112.1 19.2 1115.6 22.6" stroke-width="1.5"/>
<circle cx="1141" cy="15.9" r="7.3"/><path d="M1141 14.6V20" stroke-width="1.6"/><circle cx="1141" cy="12" r="0.95" fill="#f0f0f0" stroke="none"/>
<path d="M1173.1 9V19M1169.2 15.4 1173.1 19.4 1177 15.4M1166.5 19.8V22.4H1179.5V19.8" stroke-width="1.5"/>
<path d="M1206.8 14.4 1211.6 9.6M1203.2 17.6 1198.6 22.2M1198.6 17.4V22.3H1203.4M1206.8 9.5H1211.7V14.4" stroke-width="1.5"/>
</svg>
<div id="rp"></div><div id="rph"></div>
<span class="t" style="left:998.30px;top:41.50px;font-size:13.5px;line-height:16px;color:#ffffff;letter-spacing:-0.853px;">VCC3</span>
<svg class="i" style="left:1193px;top:42px" width="12" height="12" viewBox="1193 42 12 12"><path d="M1195 44 1203.2 52.4M1203.2 44 1195 52.4" stroke="#e6e6e6" stroke-width="1.2"/></svg>
<div class="pb" style="left:999px;width:39px;background:#6c6c6c"></div><div class="pb" style="left:1048px;width:39px"></div><div class="pb" style="left:1097px;width:31px"></div>
<span class="t" style="left:1007.20px;top:88.00px;font-size:11px;line-height:16px;color:#e4e4e4;font-weight:bold;-webkit-text-stroke:0;letter-spacing:-0.008px;">SCH</span>
<span class="t" style="left:1056.40px;top:88.00px;font-size:11px;line-height:16px;color:#e4e4e4;font-weight:bold;-webkit-text-stroke:0;letter-spacing:-0.275px;">PCB</span>
<span class="t" style="left:1105.40px;top:88.00px;font-size:11px;line-height:16px;color:#e4e4e4;font-weight:bold;-webkit-text-stroke:0;letter-spacing:0.069px;">3D</span>
<div class="hr" style="left:984px;width:237px;top:122.3px"></div>
<span class="t" style="left:1039.10px;top:139.80px;font-size:12.5px;line-height:16px;color:#e6e6e6;letter-spacing:0.029px;-webkit-text-stroke:0.3px #e6e6e6;">Net Name</span>
<span class="t" style="left:1116.20px;top:139.80px;font-size:12.5px;line-height:16px;color:#ffffff;font-weight:bold;-webkit-text-stroke:0;letter-spacing:-0.211px;">VCC3</span>
<span class="t" style="left:1012.40px;top:163.80px;font-size:12.5px;line-height:16px;color:#e6e6e6;letter-spacing:0.091px;-webkit-text-stroke:0.3px #e6e6e6;">Routed Length</span>
<span class="t" style="left:1116.20px;top:163.80px;font-size:12.5px;line-height:16px;color:#ffffff;font-weight:bold;-webkit-text-stroke:0;letter-spacing:-0.235px;">143.310mm</span>
<div class="hr" style="left:998px;width:207px;top:196.3px"></div>
<svg class="i" style="left:998px;top:217.2px" width="10" height="8" viewBox="0 0 10 8"><path d="M1.2 1.8 4.7 5.2 8.2 1.8" fill="none" stroke="#e6e6e6" stroke-width="1.6"/></svg>
<span class="t" style="left:1014.30px;top:212.90px;font-size:12.5px;line-height:16px;color:#f4f4f4;letter-spacing:0.343px;-webkit-text-stroke:0.45px #f4f4f4;">Connectivity</span>
<svg class="i" style="left:998px;top:239.4px" width="16" height="12" viewBox="0 0 16 12"><rect width="16" height="11.6" fill="#edcd84"/><path d="M9.6 7.4H16M10.4 9.5H16" stroke="#f7e6bb" stroke-width="1"/><path d="M9.6 11.6V7.4" stroke="#f7e6bb" stroke-width="0.8"/></svg>
<span class="t" style="left:1020.60px;top:237.00px;font-size:12.5px;line-height:16px;color:#dcdcdc;letter-spacing:0.004px;">2_mb_conn(Motherboard C...</span>
<svg class="i" style="left:998px;top:263.4px" width="16" height="12" viewBox="0 0 16 12"><rect width="16" height="11.6" fill="#edcd84"/><path d="M9.6 7.4H16M10.4 9.5H16" stroke="#f7e6bb" stroke-width="1"/><path d="M9.6 11.6V7.4" stroke="#f7e6bb" stroke-width="0.8"/></svg>
<span class="t" style="left:1020.60px;top:261.00px;font-size:12.5px;line-height:16px;color:#dcdcdc;letter-spacing:0.033px;">3_power(Power Supply)</span>
<svg class="i" style="left:998px;top:287.4px" width="16" height="12" viewBox="0 0 16 12"><rect width="16" height="11.6" fill="#edcd84"/><path d="M9.6 7.4H16M10.4 9.5H16" stroke="#f7e6bb" stroke-width="1"/><path d="M9.6 11.6V7.4" stroke="#f7e6bb" stroke-width="0.8"/></svg>
<span class="t" style="left:1020.60px;top:285.00px;font-size:12.5px;line-height:16px;color:#dcdcdc;letter-spacing:-0.198px;">4_cpu(CPU)</span>
<svg class="i" style="left:998px;top:311.4px" width="16" height="12" viewBox="0 0 16 12"><rect width="16" height="11.6" fill="#edcd84"/><path d="M9.6 7.4H16M10.4 9.5H16" stroke="#f7e6bb" stroke-width="1"/><path d="M9.6 11.6V7.4" stroke="#f7e6bb" stroke-width="0.8"/></svg>
<span class="t" style="left:1020.60px;top:309.00px;font-size:12.5px;line-height:16px;color:#dcdcdc;letter-spacing:-0.052px;">5_spi_memory(SPI memory ...</span>
<svg class="i" style="left:998px;top:335.4px" width="16" height="12" viewBox="0 0 16 12"><rect width="16" height="11.6" fill="#edcd84"/><path d="M9.6 7.4H16M10.4 9.5H16" stroke="#f7e6bb" stroke-width="1"/><path d="M9.6 11.6V7.4" stroke="#f7e6bb" stroke-width="0.8"/></svg>
<span class="t" style="left:1020.60px;top:333.00px;font-size:12.5px;line-height:16px;color:#dcdcdc;letter-spacing:-0.147px;">6_uart_esc_i2c(PWM/UART)</span>
<svg class="i" style="left:998px;top:359.4px" width="16" height="12" viewBox="0 0 16 12"><rect width="16" height="11.6" fill="#edcd84"/><path d="M9.6 7.4H16M10.4 9.5H16" stroke="#f7e6bb" stroke-width="1"/><path d="M9.6 11.6V7.4" stroke="#f7e6bb" stroke-width="0.8"/></svg>
<span class="t" style="left:1020.60px;top:357.00px;font-size:12.5px;line-height:16px;color:#ffffff;font-weight:bold;-webkit-text-stroke:0;letter-spacing:-0.389px;">7_can_rc_i2c_analog(CAN/...</span>
<svg class="i" style="left:1192px;top:358.8px" width="16" height="12" viewBox="0 0 16 12"><path d="M2.8 6.2 6 9.4 13.4 2.2" fill="none" stroke="#f4f4f4" stroke-width="2"/></svg>
<svg class="i" style="left:998px;top:383.4px" width="16" height="12" viewBox="0 0 16 12"><rect width="16" height="11.6" fill="#edcd84"/><path d="M9.6 7.4H16M10.4 9.5H16" stroke="#f7e6bb" stroke-width="1"/><path d="M9.6 11.6V7.4" stroke="#f7e6bb" stroke-width="0.8"/></svg>
<span class="t" style="left:1020.60px;top:381.00px;font-size:12.5px;line-height:16px;color:#dcdcdc;letter-spacing:-0.048px;">8_imu&amp;debug_conn(IMU/De...</span>
<div class="hr" style="left:998px;width:207px;top:412.4px"></div>
<svg class="i" style="left:998px;top:434.2px" width="10" height="8" viewBox="0 0 10 8"><path d="M1.2 1.8 4.7 5.2 8.2 1.8" fill="none" stroke="#e6e6e6" stroke-width="1.6"/></svg>
<span class="t" style="left:1014.30px;top:429.90px;font-size:12.5px;line-height:16px;color:#f4f4f4;letter-spacing:0.030px;-webkit-text-stroke:0.45px #f4f4f4;">Layers Used</span>
<div class="sw" style="top:454.8px;background:#ff0000"></div>
<span class="t" style="left:1022.40px;top:454.00px;font-size:12.5px;line-height:16px;color:#dcdcdc;letter-spacing:0.282px;">Top</span>
<div class="sw" style="top:478.8px;background:#0000ff"></div>
<span class="t" style="left:1022.40px;top:478.00px;font-size:12.5px;line-height:16px;color:#dcdcdc;letter-spacing:0.233px;">Bottom</span>
<div class="sw" style="top:502.8px;background:#72d2f6"></div>
<span class="t" style="left:1022.40px;top:502.00px;font-size:12.5px;line-height:16px;color:#dcdcdc;letter-spacing:0.298px;">L3</span>
<div class="sw" style="top:526.8px;background:#00c45a"></div>
<span class="t" style="left:1022.40px;top:526.00px;font-size:12.5px;line-height:16px;color:#dcdcdc;letter-spacing:0.548px;">L4</span>
</body></html>
